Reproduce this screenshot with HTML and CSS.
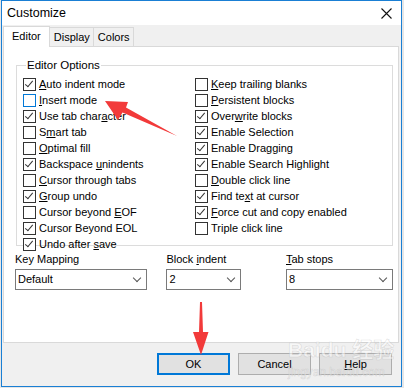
FILE: index.html
```html
<!DOCTYPE html>
<html>
<head>
    <meta charset="utf-8">
    <title>Customize</title>
    <link rel="stylesheet" href="styles.css">
</head>
<body>
<div class="window">
    <div class="titlebar">
        <span class="title">Customize</span>
        <svg class="close" width="11" height="11" viewBox="0 0 11 11"><path d="M0.5 0.5 L10.5 10.5 M10.5 0.5 L0.5 10.5" stroke="#111" stroke-width="1.1"/></svg>
    </div>
    <div class="tabs">
        <div class="tab active">Editor</div>
        <div class="tab">Display</div>
        <div class="tab">Colors</div>
    </div>
    <div class="panel">
        <fieldset class="group">
            <legend>Editor Options</legend>
            <div class="cols">
                <div class="col left">
                    <div class="opt on"><span class="box"></span><span><u>A</u>uto indent mode</span></div>
                    <div class="opt hover"><span class="box"></span><span><u>I</u>nsert mode</span></div>
                    <div class="opt on"><span class="box"></span><span>Use tab char<u>a</u>cter</span></div>
                    <div class="opt"><span class="box"></span><span>S<u>m</u>art tab</span></div>
                    <div class="opt"><span class="box"></span><span><u>O</u>ptimal fill</span></div>
                    <div class="opt on"><span class="box"></span><span>Backspace <u>u</u>nindents</span></div>
                    <div class="opt"><span class="box"></span><span><u>C</u>ursor through tabs</span></div>
                    <div class="opt on"><span class="box"></span><span><u>G</u>roup undo</span></div>
                    <div class="opt"><span class="box"></span><span>Cursor beyond <u>E</u>OF</span></div>
                    <div class="opt on"><span class="box"></span><span>Cursor Beyond EOL</span></div>
                    <div class="opt on"><span class="box"></span><span>Undo after <u>s</u>ave</span></div>
                </div>
                <div class="col">
                    <div class="opt"><span class="box"></span><span><u>K</u>eep trailing blanks</span></div>
                    <div class="opt"><span class="box"></span><span><u>P</u>ersistent blocks</span></div>
                    <div class="opt on"><span class="box"></span><span>Over<u>w</u>rite blocks</span></div>
                    <div class="opt on"><span class="box"></span><span>Enable Selection</span></div>
                    <div class="opt on"><span class="box"></span><span>Enable Dragging</span></div>
                    <div class="opt on"><span class="box"></span><span>Enable Search Highlight</span></div>
                    <div class="opt"><span class="box"></span><span><u>D</u>ouble click line</span></div>
                    <div class="opt on"><span class="box"></span><span>Find te<u>x</u>t at cursor</span></div>
                    <div class="opt on"><span class="box"></span><span><u>F</u>orce cut and copy enabled</span></div>
                    <div class="opt"><span class="box"></span><span>Triple click line</span></div>
                </div>
            </div>
        </fieldset>
        <div class="fields">
            <div class="field f1">
                <div class="label">Key Mapping</div>
                <div class="select">Default<span class="chev"></span></div>
            </div>
            <div class="field f2">
                <div class="label">Block <u>i</u>ndent</div>
                <div class="select">2<span class="chev"></span></div>
            </div>
            <div class="field f3">
                <div class="label"><u>T</u>ab stops</div>
                <div class="select">8<span class="chev"></span></div>
            </div>
        </div>
    </div>
    <div class="buttons">
        <div class="btn default">OK</div>
        <div class="btn">Cancel</div>
        <div class="btn"><u>H</u>elp</div>
    </div>
    <div class="watermark">
        <div class="wm-big">Baidu 经验</div>
        <div class="wm-small">jingyan.baidu.com</div>
    </div>
    <svg class="arrows" width="404" height="388" viewBox="0 0 404 388">
        <polygon points="105,101 128,102 126,107.5 177,136 122.5,112.5 118,120" fill="#f23a3a"/>
        <polygon points="200,302 202,302 203,332 208.5,332 201,355 193,332 199,332" fill="#f23a3a"/>
    </svg>
</div>
</body>
</html>
```

FILE: styles.css
```css
body {
    margin: 0;
    background: #e6e6e6;
    font-family: "Liberation Sans", Arial, sans-serif;
    font-size: 11px;
    color: #000;
}
u {
    text-decoration: underline;
    text-underline-offset: 1px;
}
.window {
    position: relative;
    margin-left: 1px;
    width: 399px;
    height: 385px;
    border: 1px solid #1a7fd4;
    background: #f0f0f0;
}
.titlebar {
    height: 24px;
    background: #fff;
    display: flex;
    align-items: center;
    justify-content: space-between;
    padding: 0 9px 0 5px;
}
.title {
    font-size: 12.5px;
}
.tabs {
    display: flex;
    height: 21px;
    padding-left: 1px;
    align-items: flex-end;
}
.tab {
    height: 18px;
    line-height: 18px;
    padding: 0 3px 0 4px;
    border: 1px solid #d9d9d9;
    border-bottom: none;
    margin-left: -1px;
    background: #f0f0f0;
    font-size: 11px;
}
.tab:first-child {
    margin-left: 0;
}
.tab.active {
    height: 20px;
    line-height: 18px;
    padding: 0 8px;
    background: #fff;
    position: relative;
    z-index: 1;
    margin-bottom: -1px;
}
.panel {
    margin: 0 2px 0 1px;
    background: #fff;
    border: 1px solid #d9d9d9;
    padding: 12px 5px 0 12px;
    box-sizing: border-box;
    height: 297px;
}
.group {
    margin: 0;
    padding: 4px 0 0 6px;
    border: 1px solid #dcdcdc;
    height: 187px;
    box-sizing: border-box;
}
.group legend {
    padding: 0 1px;
    margin-left: 3px;
    line-height: 13px;
    font-size: 11.5px;
}
.cols {
    display: flex;
}
.col.left {
    width: 172px;
}
.opt {
    height: 16px;
    display: flex;
    align-items: center;
    white-space: nowrap;
}
.box {
    width: 11px;
    height: 11px;
    border: 1px solid #333;
    margin-right: 3px;
    flex: none;
    background: #fff;
    position: relative;
}
.opt.hover .box {
    border-color: #0078d7;
}
.opt.on .box::after {
    content: "";
    position: absolute;
    left: 3px;
    top: 0px;
    width: 3px;
    height: 7px;
    border: solid #333;
    border-width: 0 1px 1px 0;
    transform: rotate(40deg);
}
.fields {
    display: flex;
    margin-top: 7px;
    margin-left: -1px;
}
.field .label {
    height: 14px;
    line-height: 13px;
    margin-bottom: 2px;
}
.f1 { width: 152px; }
.f2 { width: 120px; }
.f1 .select { width: 128px; }
.f2 .select { width: 71px; }
.f3 .select { width: 103px; }
.select {
    position: relative;
    height: 19px;
    line-height: 19px;
    border: 1px solid #7a7a7a;
    padding-left: 2px;
    box-sizing: content-box;
    background: #fff;
}
.chev {
    position: absolute;
    right: 6px;
    top: 5px;
    width: 5px;
    height: 5px;
    border: solid #555;
    border-width: 0 1px 1px 0;
    transform: rotate(45deg);
}
.buttons {
    display: flex;
    gap: 8px;
    padding: 10px 0 0 155px;
}
.btn {
    width: 71px;
    height: 20px;
    line-height: 20px;
    text-align: center;
    background: #e1e1e1;
    border: 1px solid #adadad;
}
.btn.default {
    border: 2px solid #0078d7;
    width: 69px;
    height: 18px;
    line-height: 18px;
}
.watermark {
    position: absolute;
    left: 286px;
    top: 337px;
    color: rgba(255, 255, 255, 0.5);
    -webkit-text-stroke: 0.6px rgba(150, 150, 150, 0.3);
    pointer-events: none;
}
.wm-big {
    font-size: 21px;
    font-weight: bold;
    font-family: "Liberation Sans", "Noto Sans CJK SC", sans-serif;
    line-height: 24px;
}
.wm-small {
    font-size: 12px;
    line-height: 14px;
    margin-top: 3px;
}
.arrows {
    position: absolute;
    left: -2px;
    top: -1px;
    pointer-events: none;
}
```
